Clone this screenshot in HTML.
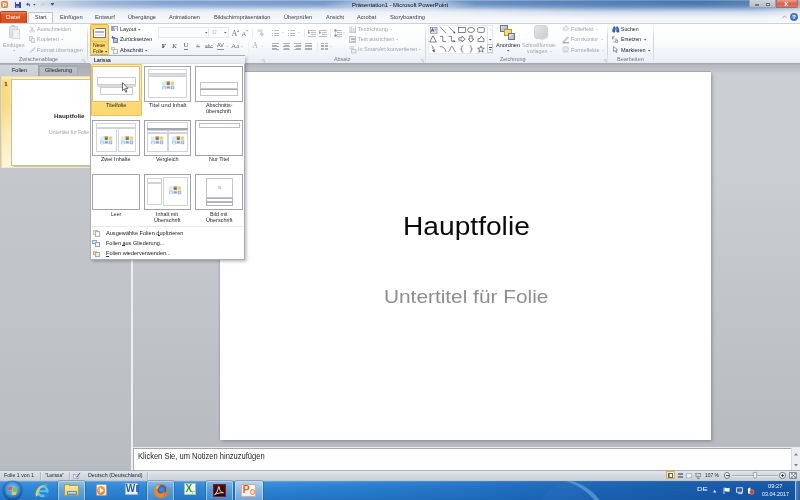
<!DOCTYPE html>
<html lang="de"><head><meta charset="utf-8"><title>Präsentation1 - Microsoft PowerPoint</title>
<style>
html,body{margin:0;padding:0;}
body{width:800px;height:500px;overflow:hidden;position:relative;background:#c3c6cb;font-family:"Liberation Sans",sans-serif;}
div,span.t,svg{position:absolute;box-sizing:border-box;}
span.t{white-space:nowrap;line-height:1;transform-origin:0 50%;}
svg{overflow:visible;}
#root{left:0;top:0;width:800px;height:500px;overflow:hidden;will-change:transform;filter:url(#soft);}
</style></head>
<body>
<svg width="0" height="0" style="position:absolute"><defs><filter id="soft" x="0" y="0" width="100%" height="100%" color-interpolation-filters="sRGB"><feGaussianBlur stdDeviation="0.4" edgeMode="duplicate"/></filter></defs></svg>
<div id="root">
<div style="left:0px;top:0px;width:800px;height:23px;background:linear-gradient(90deg,#edf1f6 0,#e4eaf2 25px,#d0dae8 45px,#b5c7e0 72px,#98b2d6 105px,#7fa2d0 165px,#7398cb 300px,#6c93c6 450px,#5582b9 600px,#4472aa 700px,#5680b3 745px,#9fb6d2 800px);"></div>
<div style="left:0px;top:0px;width:800px;height:23px;background:linear-gradient(180deg,rgba(232,238,246,0) 0,rgba(232,238,246,.06) 4px,rgba(232,238,246,.38) 7px,rgba(236,241,247,.8) 9.5px,#eef1f7 12px,#f3f5f9 17px,#f6f8fb 23px);"></div>
<div style="left:325px;top:-3px;width:150px;height:15px;background:radial-gradient(ellipse at 50% 50%,rgba(240,245,251,.62) 0,rgba(235,241,249,.45) 40%,rgba(230,238,248,0) 72%);"></div>
<div style="left:0px;top:0px;width:800px;height:1.2px;background:rgba(255,255,255,.28);"></div>
<div style="left:430px;top:0px;width:370px;height:19px;background:linear-gradient(180deg,rgba(70,112,168,.25) 0,rgba(84,125,180,.55) 6px,rgba(110,148,198,.5) 9px,rgba(140,172,212,.3) 12px,rgba(170,195,225,0) 18px);-webkit-mask-image:linear-gradient(90deg,transparent 0,#000 45%,#000 88%,rgba(0,0,0,.3) 100%);mask-image:linear-gradient(90deg,transparent 0,#000 45%,#000 88%,rgba(0,0,0,.3) 100%);"></div>
<div style="left:0.9px;top:1.1px;width:7.5px;height:7.1px;background:linear-gradient(135deg,#f7b06a,#e9873a);border-radius:1.3px;border:0.5px solid #d8803a;"></div>
<span class="t" style="left:2.63px;top:2px;font-size:6.2px;color:#fff;font-weight:bold;">P</span>
<div style="left:14.8px;top:1.8px;width:5.8px;height:6.2px;background:#3d44a6;border-radius:.5px;"></div>
<div style="left:16.4px;top:1.8px;width:2.8px;height:2.3px;background:#e3e9f6;"></div>
<div style="left:16.2px;top:5.6px;width:3px;height:2.4px;background:#8f97d2;"></div>
<svg style="left:25px;top:1.5px;" width="6" height="6" viewBox="0 0 6 6"><path d="M1 2.2 L3 0.6 V1.6 C5 1.6 5.6 3 5 5 C4.6 3.6 4 3.2 3 3.2 V4 Z" fill="#3a66c4"/></svg>
<svg style="left:33.15px;top:3.79px;" width="2.7" height="1.62" viewBox="0 0 3 1.8"><path d="M0 0H3L1.5 1.8Z" fill="#444"/></svg>
<svg style="left:39.5px;top:1.5px;" width="6" height="6" viewBox="0 0 6 6"><path d="M5 2.2 L3 0.6 V1.6 C1 1.6 0.4 3 1 5 C1.4 3.6 2 3.2 3 3.2 V4 Z" fill="#c5ccd6"/></svg>
<div style="left:51px;top:3px;width:3px;height:0.7px;background:#555;"></div>
<svg style="left:51.15px;top:4.39px;" width="2.7" height="1.62" viewBox="0 0 3 1.8"><path d="M0 0H3L1.5 1.8Z" fill="#444"/></svg>
<span class="t" style="left:351.70px;top:2px;font-size:6.2px;color:#05070a;transform:scaleX(0.9409);">Präsentation1 - Microsoft PowerPoint</span>
<div style="left:749px;top:0px;width:26.5px;height:8px;background:linear-gradient(180deg,#cdd4dd,#b3bcc8);border-radius:0 0 0 2px;border:0.5px solid #98a3b1;border-top:none;"></div>
<div style="left:775.5px;top:0px;width:22px;height:8px;background:linear-gradient(180deg,#e9a192,#d9634e 50%,#dd7561);border-radius:0 0 2px 0;border:0.5px solid #b06a5a;border-top:none;"></div>
<div style="left:754.5px;top:4.2px;width:4.5px;height:1.6px;background:#fff;border:0.3px solid #777;"></div>
<div style="left:765.5px;top:2.6px;width:4.2px;height:3.6px;background:#fff;border:0.8px solid #6a717a;"></div>
<span class="t" style="left:784.25px;top:0px;font-size:7px;color:#fff;font-weight:bold;">x</span>
<div style="left:790.3px;top:13.3px;width:7.4px;height:7.4px;border-radius:50%;background:radial-gradient(circle at 40% 35%,#6ea2e6,#2c62b8);border:0.4px solid #2a559b;"></div>
<span class="t" style="left:792.17px;top:14px;font-size:6px;color:#fff;font-weight:bold;">?</span>
<svg style="left:781.5px;top:15px;" width="5" height="4" viewBox="0 0 5 4"><path d="M0.5 3.2 L2.5 0.8 L4.5 3.2" fill="none" stroke="#9aa1ab" stroke-width=".8"/></svg>
<div style="left:0px;top:10.8px;width:27.2px;height:11.9px;background:linear-gradient(180deg,#ee8a63 0,#e2602f 18%,#d8501c 55%,#d9541f 100%);border-radius:1.5px 1.5px 0 0;border:0.5px solid #b8410f;border-bottom:none;"></div>
<span class="t" style="left:6.35px;top:15px;font-size:5.9px;color:#fff;transform:scaleX(1.0527);">Datei</span>
<div style="left:28px;top:11.7px;width:24.8px;height:11.6px;background:linear-gradient(180deg,#fbfcfe,#ffffff);border:0.6px solid #bcc5d1;border-bottom:none;border-radius:1.5px 1.5px 0 0;"></div>
<span class="t" style="left:34.65px;top:15px;font-size:5.9px;color:#2b2f36;transform:scaleX(0.9229);">Start</span>
<span class="t" style="left:59.50px;top:15px;font-size:5.9px;color:#393d45;transform:scaleX(0.9703);">Einfügen</span>
<span class="t" style="left:95.00px;top:15px;font-size:5.9px;color:#393d45;">Entwurf</span>
<span class="t" style="left:128.00px;top:15px;font-size:5.9px;color:#393d45;transform:scaleX(0.9590);">Übergänge</span>
<span class="t" style="left:169.00px;top:15px;font-size:5.9px;color:#393d45;transform:scaleX(0.9451);">Animationen</span>
<span class="t" style="left:213.75px;top:15px;font-size:5.9px;color:#393d45;transform:scaleX(0.9466);">Bildschirmpräsentation</span>
<span class="t" style="left:283.85px;top:15px;font-size:5.9px;color:#393d45;transform:scaleX(0.9587);">Überprüfen</span>
<span class="t" style="left:325.70px;top:15px;font-size:5.9px;color:#393d45;transform:scaleX(0.9303);">Ansicht</span>
<span class="t" style="left:356.85px;top:15px;font-size:5.9px;color:#393d45;transform:scaleX(0.9492);">Acrobat</span>
<span class="t" style="left:389.50px;top:15px;font-size:5.9px;color:#393d45;transform:scaleX(0.9528);">Storyboarding</span>
<div style="left:0px;top:22.8px;width:800px;height:40.2px;background:linear-gradient(180deg,#ffffff 0,#fbfcfd 45%,#f1f4f8 75%,#e9edf3 100%);border-top:0.6px solid #cbd2dc;"></div>
<div style="left:0px;top:62.6px;width:800px;height:0.8px;background:#9ea4ad;"></div>
<div style="left:8.6px;top:25.8px;width:9px;height:11.8px;background:linear-gradient(135deg,#e6e8ec,#d6d9de);border-radius:1px;border:0.4px solid #d0d3d9;"></div>
<div style="left:12.4px;top:29.4px;width:8px;height:9.8px;background:#f1f2f5;border:0.5px solid #d3d6dc;"></div>
<div style="left:11.3px;top:24.9px;width:4px;height:2px;background:#c9ccd2;border-radius:.6px;"></div>
<span class="t" style="left:3.25px;top:43px;font-size:5.6px;color:#a0a4aa;transform:scaleX(0.9725);">Einfügen</span>
<svg style="left:12.8px;top:49.88px;" width="2.4" height="1.44" viewBox="0 0 3 1.8"><path d="M0 0H3L1.5 1.8Z" fill="#b9bdc3"/></svg>
<svg style="left:29px;top:26px;" width="6" height="6.5" viewBox="0 0 6 6.5"><path d="M1.5 0.5L4 4.5M4.5 0.5L2 4.5" stroke="#b6bac1" stroke-width=".7" fill="none"/><circle cx="1.6" cy="5.3" r="1" fill="none" stroke="#b6bac1" stroke-width=".6"/><circle cx="4.4" cy="5.3" r="1" fill="none" stroke="#b6bac1" stroke-width=".6"/></svg>
<span class="t" style="left:37.00px;top:27px;font-size:5.6px;color:#a0a4aa;transform:scaleX(0.9664);">Ausschneiden</span>
<div style="left:29px;top:36.3px;width:4px;height:4.6px;background:#eef0f3;border:0.5px solid #c9ccd3;"></div>
<div style="left:31px;top:38px;width:4px;height:4.6px;background:#eef0f3;border:0.5px solid #c9ccd3;"></div>
<span class="t" style="left:37.00px;top:37px;font-size:5.6px;color:#a0a4aa;transform:scaleX(0.9814);">Kopieren</span>
<svg style="left:61.3px;top:39.08px;" width="2.4" height="1.44" viewBox="0 0 3 1.8"><path d="M0 0H3L1.5 1.8Z" fill="#b9bdc3"/></svg>
<svg style="left:28.5px;top:46.5px;" width="7" height="7" viewBox="0 0 7 7"><path d="M6 0.5L3 4.2 L1 6.2 L0.6 5 L2.4 3.4 Z" fill="#c3c6cc"/><path d="M6.2 0.3L3.3 4" stroke="#aeb2b9" stroke-width=".8"/></svg>
<span class="t" style="left:37.00px;top:48px;font-size:5.6px;color:#a0a4aa;transform:scaleX(0.9918);">Format übertragen</span>
<span class="t" style="left:19.00px;top:57px;font-size:5.5px;color:#727882;transform:scaleX(0.9812);">Zwischenablage</span>
<svg style="left:81.5px;top:59.2px;" width="3.2" height="3.2" viewBox="0 0 3.2 3.2"><path d="M0.3 2.6V0.3H2.6" fill="none" stroke="#b4b9c1" stroke-width=".5"/><path d="M1.3 1.3L2.9 2.9M2.9 1.6V2.9H1.6" fill="none" stroke="#a3a9b2" stroke-width=".5"/></svg>
<div style="left:87.3px;top:25px;width:0.7px;height:36px;background:linear-gradient(180deg,rgba(200,206,215,0),#cfd5de 30%,#cfd5de 80%,rgba(200,206,215,.2));"></div>
<div style="left:89.7px;top:24.3px;width:19.7px;height:30.3px;background:linear-gradient(180deg,#fcd660 0,#fddf82 38%,#fcd564 58%,#fde08a 100%);border:0.6px solid #e4b243;border-radius:1.3px;"></div>
<div style="left:90.2px;top:41.2px;width:18.7px;height:0.6px;background:#e9bd55;"></div>
<div style="left:93.2px;top:28px;width:12.7px;height:10.3px;background:#fdfdfe;border:0.7px solid #70747c;border-bottom-width:1px;border-radius:.6px;"></div>
<div style="left:94.6px;top:31.3px;width:9.9px;height:2.1px;background:#aeb6c8;"></div>
<div style="left:94.6px;top:33.8px;width:9.9px;height:1.8px;background:#dde1ea;"></div>
<svg style="left:91.6px;top:26px;" width="4.4" height="4.4" viewBox="0 0 4.4 4.4"><path d="M2.2 0L2.8 1.6L4.4 2.2L2.8 2.8L2.2 4.4L1.6 2.8L0 2.2L1.6 1.6Z" fill="#fbe08a" stroke="#f0b43a" stroke-width=".25"/></svg>
<span class="t" style="left:93.30px;top:43px;font-size:5.6px;color:#2a2614;transform:scaleX(0.9113);">Neue</span>
<span class="t" style="left:92.70px;top:49px;font-size:5.6px;color:#2a2614;transform:scaleX(0.8568);">Folie</span>
<svg style="left:104.9px;top:50.68px;" width="2.4" height="1.44" viewBox="0 0 3 1.8"><path d="M0 0H3L1.5 1.8Z" fill="#3a3520"/></svg>
<div style="left:111.3px;top:26.3px;width:6.5px;height:5.2px;background:linear-gradient(180deg,#d5dff0,#b3c3de);border:0.5px solid #93a2bb;"></div>
<div style="left:112.2px;top:27.3px;width:1.8px;height:3.2px;background:#8fa3c4;"></div>
<div style="left:114.6px;top:27.3px;width:2.4px;height:0.5px;background:#eef3fa;"></div>
<div style="left:114.6px;top:28.6px;width:2.4px;height:0.5px;background:#eef3fa;"></div>
<div style="left:114.6px;top:29.9px;width:2.4px;height:0.5px;background:#eef3fa;"></div>
<span class="t" style="left:120.00px;top:27px;font-size:5.6px;color:#22252b;transform:scaleX(0.9694);">Layout</span>
<svg style="left:138.1px;top:28.78px;" width="2.4" height="1.44" viewBox="0 0 3 1.8"><path d="M0 0H3L1.5 1.8Z" fill="#555"/></svg>
<div style="left:112.8px;top:38px;width:5.4px;height:4.8px;background:linear-gradient(180deg,#c9d5e8,#9fb2cf);border:0.5px solid #7487a6;"></div>
<svg style="left:111px;top:35.4px;" width="5.2" height="4.6" viewBox="0 0 5.2 4.6"><path d="M0.3 2.4 L2 0.6 V1.7 C3.6 1.7 4.3 2.5 4.4 3.8 C3.7 3 3 2.9 2 2.9 V4 Z" fill="#2d62b6"/></svg>
<span class="t" style="left:120.00px;top:37px;font-size:5.6px;color:#22252b;transform:scaleX(0.9609);">Zurücksetzen</span>
<div style="left:111.4px;top:46.8px;width:3.2px;height:3.2px;background:#f5ecc4;border:0.4px solid #d4c58c;"></div>
<div style="left:113.4px;top:48.6px;width:4.8px;height:5.2px;background:#f4f5f7;border:0.5px solid #b3b8c1;"></div>
<span class="t" style="left:120.00px;top:48px;font-size:5.6px;color:#22252b;transform:scaleX(1.0072);">Abschnitt</span>
<svg style="left:145.1px;top:49.68px;" width="2.4" height="1.44" viewBox="0 0 3 1.8"><path d="M0 0H3L1.5 1.8Z" fill="#555"/></svg>
<div style="left:155.8px;top:25px;width:0.7px;height:36px;background:linear-gradient(180deg,rgba(200,206,215,0),#cfd5de 30%,#cfd5de 80%,rgba(200,206,215,.2));"></div>
<div style="left:158.3px;top:26.8px;width:50.5px;height:11.2px;background:#fbfcfd;border:0.6px solid #e4e7ed;"></div>
<div style="left:208.8px;top:26.8px;width:20.4px;height:11.2px;background:#fbfcfd;border:0.6px solid #e4e7ed;border-left:none;"></div>
<svg style="left:204.725px;top:31.935px;" width="2.55" height="1.53" viewBox="0 0 3 1.8"><path d="M0 0H3L1.5 1.8Z" fill="#5a5f67"/></svg>
<span class="t" style="left:212.00px;top:30px;font-size:5.2px;color:#b7bbc2;transform:scaleX(0.7953);">32</span>
<svg style="left:223.725px;top:31.935px;" width="2.55" height="1.53" viewBox="0 0 3 1.8"><path d="M0 0H3L1.5 1.8Z" fill="#5a5f67"/></svg>
<span class="t" style="left:231.41px;top:30px;font-size:8px;color:#6a6f77;font-family:'Liberation Serif',serif;">A</span>
<svg style="left:236.5px;top:29.6px;" width="2.4" height="2" viewBox="0 0 2.4 2"><path d="M0 2L1.2 0L2.4 2Z" fill="#9398a0"/></svg>
<span class="t" style="left:241.42px;top:31px;font-size:6.6px;color:#7d828a;font-family:'Liberation Serif',serif;">A</span>
<svg style="left:245.6px;top:29.8px;" width="2.2" height="1.8" viewBox="0 0 2.2 1.8"><path d="M0 0L1.1 1.8L2.2 0Z" fill="#a2a7ae"/></svg>
<div style="left:252.3px;top:27.5px;width:0.6px;height:10px;background:#eceff3;"></div>
<svg style="left:256.5px;top:28.5px;" width="8" height="8" viewBox="0 0 8 8"><path d="M0.6 1h5.2M1 2.3h4.4M4.2 3.2 L6.6 5.6 L5 7 L3.2 5.2Z" fill="#cfd3d9" stroke="#b4b9c0" stroke-width=".7"/></svg>
<span class="t" style="left:161.72px;top:43px;font-size:6.8px;color:#3f434a;font-weight:bold;font-family:'Liberation Serif',serif;">F</span>
<span class="t" style="left:172.13px;top:43px;font-size:6.8px;color:#494d55;font-style:italic;font-family:'Liberation Serif',serif;">K</span>
<span class="t" style="left:183.47px;top:42px;font-size:7px;color:#51555d;font-family:'Liberation Serif',serif;">U</span>
<div style="left:183.6px;top:49.2px;width:4.8px;height:0.5px;background:#777c84;"></div>
<span class="t" style="left:196.16px;top:43px;font-size:6.6px;color:#9a9fa6;font-family:'Liberation Serif',serif;">S</span>
<div style="left:195.6px;top:46.2px;width:4.8px;height:0.45px;background:#9a9fa6;"></div>
<span class="t" style="left:205.10px;top:44px;font-size:5px;color:#6d727a;transform:scaleX(0.9675);">abc</span>
<div style="left:205px;top:46.6px;width:8px;height:0.5px;background:#8f949c;"></div>
<span class="t" style="left:216.90px;top:44px;font-size:4.8px;color:#5b6068;transform:scaleX(1.1245);">AV</span>
<div style="left:217px;top:48.8px;width:6.6px;height:0.5px;background:#8f949c;"></div>
<svg style="left:225.55px;top:45.97px;" width="2.1" height="1.26" viewBox="0 0 3 1.8"><path d="M0 0H3L1.5 1.8Z" fill="#c4c8cf"/></svg>
<span class="t" style="left:231.30px;top:43px;font-size:7px;color:#72777f;font-family:'Liberation Serif',serif;transform:scaleX(1.0291);">Aa</span>
<svg style="left:241.25px;top:45.97px;" width="2.1" height="1.26" viewBox="0 0 3 1.8"><path d="M0 0H3L1.5 1.8Z" fill="#c4c8cf"/></svg>
<div style="left:247.8px;top:41.5px;width:0.6px;height:9.5px;background:#eceff3;"></div>
<span class="t" style="left:252.46px;top:42px;font-size:7.6px;color:#aeb2b9;font-family:'Liberation Serif',serif;">A</span>
<svg style="left:261.35px;top:45.97px;" width="2.1" height="1.26" viewBox="0 0 3 1.8"><path d="M0 0H3L1.5 1.8Z" fill="#cfd3d9"/></svg>
<svg style="left:262px;top:59.2px;" width="3.2" height="3.2" viewBox="0 0 3.2 3.2"><path d="M0.3 2.6V0.3H2.6" fill="none" stroke="#b4b9c1" stroke-width=".5"/><path d="M1.3 1.3L2.9 2.9M2.9 1.6V2.9H1.6" fill="none" stroke="#a3a9b2" stroke-width=".5"/></svg>
<div style="left:266.6px;top:25px;width:0.7px;height:36px;background:linear-gradient(180deg,rgba(200,206,215,0),#cfd5de 30%,#cfd5de 80%,rgba(200,206,215,.2));"></div>
<div style="left:272px;top:30.2px;width:1.2px;height:1.2px;background:#a9aeb6;"></div>
<div style="left:274.2px;top:30.4px;width:4.8px;height:0.7px;background:#b9bdc4;"></div>
<div style="left:272px;top:32.5px;width:1.2px;height:1.2px;background:#a9aeb6;"></div>
<div style="left:274.2px;top:32.7px;width:4.8px;height:0.7px;background:#b9bdc4;"></div>
<div style="left:272px;top:34.8px;width:1.2px;height:1.2px;background:#a9aeb6;"></div>
<div style="left:274.2px;top:35px;width:4.8px;height:0.7px;background:#b9bdc4;"></div>
<div style="left:288px;top:30.2px;width:1.2px;height:1.2px;background:#a9aeb6;"></div>
<div style="left:290.2px;top:30.4px;width:4.8px;height:0.7px;background:#b9bdc4;"></div>
<div style="left:288px;top:32.5px;width:1.2px;height:1.2px;background:#a9aeb6;"></div>
<div style="left:290.2px;top:32.7px;width:4.8px;height:0.7px;background:#b9bdc4;"></div>
<div style="left:288px;top:34.8px;width:1.2px;height:1.2px;background:#a9aeb6;"></div>
<div style="left:290.2px;top:35px;width:4.8px;height:0.7px;background:#b9bdc4;"></div>
<svg style="left:281.95px;top:32.37px;" width="2.1" height="1.26" viewBox="0 0 3 1.8"><path d="M0 0H3L1.5 1.8Z" fill="#cdd1d7"/></svg>
<svg style="left:297.95px;top:32.37px;" width="2.1" height="1.26" viewBox="0 0 3 1.8"><path d="M0 0H3L1.5 1.8Z" fill="#cdd1d7"/></svg>
<div style="left:303.8px;top:27.5px;width:0.6px;height:10px;background:#eaedf1;"></div>
<div style="left:308px;top:29.6px;width:7.5px;height:0.7px;background:#b9bdc4;"></div>
<div style="left:311px;top:31.6px;width:4.5px;height:0.7px;background:#b9bdc4;"></div>
<div style="left:311px;top:33.6px;width:4.5px;height:0.7px;background:#b9bdc4;"></div>
<div style="left:308px;top:35.6px;width:7.5px;height:0.7px;background:#b9bdc4;"></div>
<svg style="left:308px;top:31px;" width="2.6" height="3" viewBox="0 0 2.6 3"><path d="M0 0L2.4 1.5L0 3Z" fill="#8f96a3"/></svg>
<div style="left:319px;top:29.6px;width:7.5px;height:0.7px;background:#b9bdc4;"></div>
<div style="left:322px;top:31.6px;width:4.5px;height:0.7px;background:#b9bdc4;"></div>
<div style="left:322px;top:33.6px;width:4.5px;height:0.7px;background:#b9bdc4;"></div>
<div style="left:319px;top:35.6px;width:7.5px;height:0.7px;background:#b9bdc4;"></div>
<svg style="left:319px;top:31px;" width="2.6" height="3" viewBox="0 0 2.6 3"><path d="M0 0L2.4 1.5L0 3Z" fill="#8f96a3"/></svg>
<div style="left:330px;top:27.5px;width:0.6px;height:10px;background:#eaedf1;"></div>
<div style="left:337px;top:29.8px;width:4.5px;height:0.7px;background:#b9bdc4;"></div>
<div style="left:337px;top:31.7px;width:4.5px;height:0.7px;background:#b9bdc4;"></div>
<div style="left:337px;top:33.6px;width:4.5px;height:0.7px;background:#b9bdc4;"></div>
<div style="left:337px;top:35.5px;width:4.5px;height:0.7px;background:#b9bdc4;"></div>
<svg style="left:333.6px;top:28.8px;" width="3" height="8" viewBox="0 0 3 8"><path d="M1.5 0L3 2H0ZM1.5 8L3 6H0ZM1.5 1.5V6.5" fill="#8f949c" stroke="#8f949c" stroke-width=".5"/></svg>
<svg style="left:343.35px;top:32.37px;" width="2.1" height="1.26" viewBox="0 0 3 1.8"><path d="M0 0H3L1.5 1.8Z" fill="#cdd1d7"/></svg>
<div style="left:272px;top:43.2px;width:7px;height:0.7px;background:#aab0b9;"></div>
<div style="left:272px;top:44.7px;width:5px;height:0.7px;background:#aab0b9;"></div>
<div style="left:272px;top:46.2px;width:7px;height:0.7px;background:#aab0b9;"></div>
<div style="left:272px;top:47.7px;width:5px;height:0.7px;background:#aab0b9;"></div>
<div style="left:272px;top:49.2px;width:7px;height:0.7px;background:#aab0b9;"></div>
<div style="left:283px;top:43.2px;width:7px;height:0.7px;background:#aab0b9;"></div>
<div style="left:284px;top:44.7px;width:5px;height:0.7px;background:#aab0b9;"></div>
<div style="left:283px;top:46.2px;width:7px;height:0.7px;background:#aab0b9;"></div>
<div style="left:284px;top:47.7px;width:5px;height:0.7px;background:#aab0b9;"></div>
<div style="left:283px;top:49.2px;width:7px;height:0.7px;background:#aab0b9;"></div>
<div style="left:294px;top:43.2px;width:7px;height:0.7px;background:#aab0b9;"></div>
<div style="left:296px;top:44.7px;width:5px;height:0.7px;background:#aab0b9;"></div>
<div style="left:294px;top:46.2px;width:7px;height:0.7px;background:#aab0b9;"></div>
<div style="left:296px;top:47.7px;width:5px;height:0.7px;background:#aab0b9;"></div>
<div style="left:294px;top:49.2px;width:7px;height:0.7px;background:#aab0b9;"></div>
<div style="left:305px;top:43.2px;width:7px;height:0.7px;background:#aab0b9;"></div>
<div style="left:305px;top:44.7px;width:7px;height:0.7px;background:#aab0b9;"></div>
<div style="left:305px;top:46.2px;width:7px;height:0.7px;background:#aab0b9;"></div>
<div style="left:305px;top:47.7px;width:7px;height:0.7px;background:#aab0b9;"></div>
<div style="left:305px;top:49.2px;width:7px;height:0.7px;background:#aab0b9;"></div>
<div style="left:316.6px;top:41.5px;width:0.6px;height:9.5px;background:#eaedf1;"></div>
<div style="left:320.5px;top:43.2px;width:3px;height:0.7px;background:#aab0b9;"></div>
<div style="left:320.5px;top:44.7px;width:3px;height:0.7px;background:#aab0b9;"></div>
<div style="left:320.5px;top:46.2px;width:3px;height:0.7px;background:#aab0b9;"></div>
<div style="left:320.5px;top:47.7px;width:3px;height:0.7px;background:#aab0b9;"></div>
<div style="left:320.5px;top:49.2px;width:3px;height:0.7px;background:#aab0b9;"></div>
<div style="left:324.5px;top:43.2px;width:3px;height:0.7px;background:#aab0b9;"></div>
<div style="left:324.5px;top:44.7px;width:3px;height:0.7px;background:#aab0b9;"></div>
<div style="left:324.5px;top:46.2px;width:3px;height:0.7px;background:#aab0b9;"></div>
<div style="left:324.5px;top:47.7px;width:3px;height:0.7px;background:#aab0b9;"></div>
<div style="left:324.5px;top:49.2px;width:3px;height:0.7px;background:#aab0b9;"></div>
<svg style="left:330.35px;top:45.97px;" width="2.1" height="1.26" viewBox="0 0 3 1.8"><path d="M0 0H3L1.5 1.8Z" fill="#cdd1d7"/></svg>
<svg style="left:349px;top:25.5px;" width="7.5" height="7" viewBox="0 0 7.5 7"><path d="M1 0.5V6M2.8 0.5V6M4.8 2V6M6.4 0.5V6M0.4 6.4H7.1" stroke="#a5aab2" stroke-width=".7" fill="none"/></svg>
<span class="t" style="left:357.80px;top:27px;font-size:5.6px;color:#a0a4aa;">Textrichtung</span>
<svg style="left:390.075px;top:28.825px;" width="2.25" height="1.35" viewBox="0 0 3 1.8"><path d="M0 0H3L1.5 1.8Z" fill="#c4c8cf"/></svg>
<div style="left:349.3px;top:36px;width:6.6px;height:6.6px;background:#f0f1f4;border:0.5px solid #bfc3ca;"></div>
<div style="left:350.6px;top:37.6px;width:4px;height:0.7px;background:#b5b9c0;"></div>
<div style="left:350.6px;top:39.1px;width:4px;height:0.7px;background:#b5b9c0;"></div>
<div style="left:350.6px;top:40.6px;width:4px;height:0.7px;background:#b5b9c0;"></div>
<span class="t" style="left:357.80px;top:37px;font-size:5.6px;color:#a0a4aa;transform:scaleX(0.9611);">Text ausrichten</span>
<svg style="left:396.075px;top:39.125px;" width="2.25" height="1.35" viewBox="0 0 3 1.8"><path d="M0 0H3L1.5 1.8Z" fill="#c4c8cf"/></svg>
<svg style="left:349px;top:45.6px;" width="7.5" height="7.5" viewBox="0 0 7.5 7.5"><path d="M0.5 0.8H5M0.5 2.3H5M2.5 3.5H7V7H2.5Z" stroke="#b2b6bd" stroke-width=".7" fill="#eceef1"/></svg>
<span class="t" style="left:357.80px;top:47px;font-size:5.6px;color:#a0a4aa;transform:scaleX(0.9787);">In SmartArt konvertieren</span>
<svg style="left:419.175px;top:49.225px;" width="2.25" height="1.35" viewBox="0 0 3 1.8"><path d="M0 0H3L1.5 1.8Z" fill="#c4c8cf"/></svg>
<span class="t" style="left:334.05px;top:57px;font-size:5.5px;color:#727882;transform:scaleX(0.9813);">Absatz</span>
<svg style="left:420.8px;top:59.2px;" width="3.2" height="3.2" viewBox="0 0 3.2 3.2"><path d="M0.3 2.6V0.3H2.6" fill="none" stroke="#b4b9c1" stroke-width=".5"/><path d="M1.3 1.3L2.9 2.9M2.9 1.6V2.9H1.6" fill="none" stroke="#a3a9b2" stroke-width=".5"/></svg>
<div style="left:425.4px;top:25px;width:0.7px;height:36px;background:linear-gradient(180deg,rgba(200,206,215,0),#cfd5de 30%,#cfd5de 80%,rgba(200,206,215,.2));"></div>
<div style="left:428.3px;top:25px;width:65px;height:28.6px;background:#fdfdfe;border:0.6px solid #e6e9ee;"></div>
<div style="left:486.6px;top:25px;width:0.6px;height:28.6px;background:#e3e6ec;"></div>
<svg style="left:429.6px;top:26.6px;" width="7.4" height="6.6" viewBox="0 0 7.4 6.6"><rect x=".4" y=".4" width="6.6" height="5.8" fill="#e4ebf6" stroke="#66748c" stroke-width=".6"/><path d="M1.2 4.8L2.6 1.4L4 4.8M1.7 3.7H3.5" fill="none" stroke="#2b3a58" stroke-width=".75"/><path d="M4.6 2H6.4M4.6 3.3H6.4" stroke="#5b6a85" stroke-width=".5"/></svg>
<svg style="left:438.6px;top:26px;" width="8" height="8" viewBox="0 0 8 8"><path d="M1 0.8L7 7.2" fill="none" stroke="#464a52" stroke-width=".68"/></svg>
<svg style="left:448.4px;top:26px;" width="8" height="8" viewBox="0 0 8 8"><path d="M0.8 0.8L6.6 6.8" fill="none" stroke="#464a52" stroke-width=".68"/><path d="M7.4 7.6L5 6.9L6.7 5.2Z" fill="#464a52"/></svg>
<svg style="left:458px;top:26px;" width="8" height="8" viewBox="0 0 8 8"><rect x="0.6" y="1.6" width="6.8" height="4.8" fill="none" stroke="#464a52" stroke-width=".68"/></svg>
<svg style="left:467.4px;top:26px;" width="8" height="8" viewBox="0 0 8 8"><ellipse cx="4" cy="4" rx="3.5" ry="2.5" fill="none" stroke="#464a52" stroke-width=".68"/></svg>
<svg style="left:477px;top:26px;" width="8" height="8" viewBox="0 0 8 8"><rect x="0.6" y="1.6" width="6.8" height="4.8" rx="1.1" fill="none" stroke="#464a52" stroke-width=".68"/></svg>
<svg style="left:429.2px;top:35.4px;" width="8" height="8" viewBox="0 0 8 8"><path d="M4 0.8L7.3 7H0.7Z" fill="none" stroke="#464a52" stroke-width=".68"/></svg>
<svg style="left:438.6px;top:35.4px;" width="8" height="8" viewBox="0 0 8 8"><path d="M0.8 1.4H3.8V6.6H7" fill="none" stroke="#464a52" stroke-width=".68"/></svg>
<svg style="left:448.4px;top:35.4px;" width="8" height="8" viewBox="0 0 8 8"><path d="M0.6 1.4H3.6V6.2H6" fill="none" stroke="#464a52" stroke-width=".68"/><path d="M7.6 6.2L5.6 5V7.4Z" fill="#464a52"/></svg>
<svg style="left:458px;top:35.4px;" width="8" height="8" viewBox="0 0 8 8"><path d="M0.8 2.8H4V1.2L7.2 4L4 6.8V5.2H0.8Z" fill="none" stroke="#464a52" stroke-width=".68"/></svg>
<svg style="left:467.4px;top:35.4px;" width="8" height="8" viewBox="0 0 8 8"><path d="M2.8 0.8H5.2V4H6.8L4 7.2L1.2 4H2.8Z" fill="none" stroke="#464a52" stroke-width=".68"/></svg>
<svg style="left:477px;top:35.4px;" width="8" height="8" viewBox="0 0 8 8"><path d="M1 6.6V3.8L3 3.4L4.4 1.2L5.8 3.4L7 3.8V6.6Z" fill="none" stroke="#464a52" stroke-width=".68"/></svg>
<svg style="left:429.2px;top:44.8px;" width="8" height="8" viewBox="0 0 8 8"><path d="M2.6 0.6L4.4 2.2L3.4 2.8L5 4.6" fill="none" stroke="#464a52" stroke-width=".68"/><path d="M5.6 7.4L3 5.6L5.6 4.2Z" fill="#464a52"/></svg>
<svg style="left:438.6px;top:44.8px;" width="8" height="8" viewBox="0 0 8 8"><path d="M0.8 1.6C4 1.4 6.2 3.4 7 7" fill="none" stroke="#464a52" stroke-width=".68"/></svg>
<svg style="left:448.4px;top:44.8px;" width="8" height="8" viewBox="0 0 8 8"><path d="M0.6 6.6C2 6 2.6 1.2 3.8 1.2C5 1.2 5.6 5 7.4 7" fill="none" stroke="#464a52" stroke-width=".68"/></svg>
<svg style="left:458px;top:44.8px;" width="8" height="8" viewBox="0 0 8 8"><path d="M5.2 0.6C3.6 0.6 4 2.2 3.8 3.2C3.7 3.8 3 4 2.6 4C3 4 3.7 4.2 3.8 4.8C4 5.8 3.6 7.4 5.2 7.4" fill="none" stroke="#464a52" stroke-width=".68"/></svg>
<svg style="left:467.4px;top:44.8px;" width="8" height="8" viewBox="0 0 8 8"><path d="M2.8 0.6C4.4 0.6 4 2.2 4.2 3.2C4.3 3.8 5 4 5.4 4C5 4 4.3 4.2 4.2 4.8C4 5.8 4.4 7.4 2.8 7.4" fill="none" stroke="#464a52" stroke-width=".68"/></svg>
<svg style="left:477px;top:44.8px;" width="8" height="8" viewBox="0 0 8 8"><path d="M4 0.8L4.9 3.1L7.4 3.2L5.4 4.8L6.1 7.2L4 5.8L1.9 7.2L2.6 4.8L0.6 3.2L3.1 3.1Z" fill="none" stroke="#464a52" stroke-width=".68"/></svg>
<svg style="left:488.6px;top:29.3px;" width="3" height="1.6" viewBox="0 0 3 1.6"><path d="M0 1.6L1.5 0L3 1.6Z" fill="#d3d7dd"/></svg>
<svg style="left:488.725px;top:38.835px;" width="2.55" height="1.53" viewBox="0 0 3 1.8"><path d="M0 0H3L1.5 1.8Z" fill="#4b5058"/></svg>
<div style="left:487.2px;top:44.2px;width:5.9px;height:9.2px;border:0.5px solid #c3c8d0;background:#f6f8fa;"></div>
<div style="left:488.6px;top:46.8px;width:3px;height:0.6px;background:#4b5058;"></div>
<svg style="left:488.825px;top:48.535px;" width="2.55" height="1.53" viewBox="0 0 3 1.8"><path d="M0 0H3L1.5 1.8Z" fill="#4b5058"/></svg>
<div style="left:500px;top:25.4px;width:7.6px;height:6.6px;background:linear-gradient(135deg,#dfe4ec,#9aa6b8);border:0.6px solid #6d7685;"></div>
<div style="left:503.6px;top:29.2px;width:8px;height:7px;background:linear-gradient(135deg,#fbe88f,#f0cf4e);border:0.6px solid #b79a2c;"></div>
<div style="left:508px;top:33.2px;width:7px;height:6.4px;background:linear-gradient(135deg,#e4e7ec,#a4abb8);border:0.6px solid #6d7685;"></div>
<span class="t" style="left:496.20px;top:43px;font-size:5.6px;color:#22252b;transform:scaleX(0.9881);">Anordnen</span>
<svg style="left:506.925px;top:50.435px;" width="2.55" height="1.53" viewBox="0 0 3 1.8"><path d="M0 0H3L1.5 1.8Z" fill="#4b5058"/></svg>
<div style="left:534.4px;top:25.4px;width:13.6px;height:14px;background:linear-gradient(135deg,#e4e6ea,#c9ccd2);border-radius:3px;border:0.5px solid #d0d3d9;"></div>
<svg style="left:540px;top:33px;" width="8.4" height="6.8" viewBox="0 0 8.4 6.8"><path d="M8 0C7.4 3.6 4.6 6.2 0.6 6.6C4 6.8 8 5.4 8 0Z" fill="#f7f8fa" stroke="#c7cbd1" stroke-width=".4"/></svg>
<span class="t" style="left:522.25px;top:43px;font-size:5.6px;color:#a0a4aa;transform:scaleX(0.9556);">Schnellformat-</span>
<span class="t" style="left:527.40px;top:49px;font-size:5.6px;color:#a0a4aa;transform:scaleX(0.9496);">vorlagen</span>
<svg style="left:550.475px;top:51.225px;" width="2.25" height="1.35" viewBox="0 0 3 1.8"><path d="M0 0H3L1.5 1.8Z" fill="#c4c8cf"/></svg>
<svg style="left:562px;top:25.4px;" width="7.5" height="7" viewBox="0 0 7.5 7"><path d="M2.2 2.2L4.4 0.6L6.6 3.6L3.6 5.8L1.4 4Z" fill="#eceef1" stroke="#b0b4bb" stroke-width=".6"/><path d="M1 4.6C0.4 5.4 0.6 6.2 1.2 6.2C1.8 6.2 1.8 5.4 1 4.6Z" fill="#c2c6cc"/></svg>
<span class="t" style="left:571.00px;top:27px;font-size:5.6px;color:#a0a4aa;transform:scaleX(0.9947);">Fülleffekt</span>
<svg style="left:595.875px;top:28.525px;" width="2.25" height="1.35" viewBox="0 0 3 1.8"><path d="M0 0H3L1.5 1.8Z" fill="#c4c8cf"/></svg>
<svg style="left:562px;top:35.6px;" width="7.5" height="7" viewBox="0 0 7.5 7"><path d="M1 5.4L5.6 0.8L6.6 1.8L2 6.2Z" fill="#d5d8dd" stroke="#9da2aa" stroke-width=".5"/><path d="M0.4 6.8H7" stroke="#7e838b" stroke-width=".9"/></svg>
<span class="t" style="left:571.00px;top:37px;font-size:5.6px;color:#a0a4aa;transform:scaleX(0.9431);">Formkontur</span>
<svg style="left:600.675px;top:39.025px;" width="2.25" height="1.35" viewBox="0 0 3 1.8"><path d="M0 0H3L1.5 1.8Z" fill="#c4c8cf"/></svg>
<svg style="left:562px;top:46px;" width="7.5" height="7" viewBox="0 0 7.5 7"><ellipse cx="3.6" cy="3" rx="3" ry="2.4" fill="#e4e6ea" stroke="#b9bdc4" stroke-width=".5"/><path d="M0.8 5.8H6.6" stroke="#c3c7cd" stroke-width=".9"/></svg>
<span class="t" style="left:571.00px;top:48px;font-size:5.6px;color:#a0a4aa;transform:scaleX(0.9572);">Formeffekte</span>
<svg style="left:601.875px;top:49.525px;" width="2.25" height="1.35" viewBox="0 0 3 1.8"><path d="M0 0H3L1.5 1.8Z" fill="#c4c8cf"/></svg>
<span class="t" style="left:499.75px;top:57px;font-size:5.5px;color:#727882;transform:scaleX(0.9928);">Zeichnung</span>
<svg style="left:603.8px;top:59.2px;" width="3.2" height="3.2" viewBox="0 0 3.2 3.2"><path d="M0.3 2.6V0.3H2.6" fill="none" stroke="#b4b9c1" stroke-width=".5"/><path d="M1.3 1.3L2.9 2.9M2.9 1.6V2.9H1.6" fill="none" stroke="#a3a9b2" stroke-width=".5"/></svg>
<div style="left:607.4px;top:25px;width:0.7px;height:36px;background:linear-gradient(180deg,rgba(200,206,215,0),#cfd5de 30%,#cfd5de 80%,rgba(200,206,215,.2));"></div>
<svg style="left:612px;top:25.6px;" width="7.6" height="6.8" viewBox="0 0 7.6 6.8"><path d="M0.6 3.6L1.8 0.8H3.2V3.4M7 3.6L5.8 0.8H4.4V3.4" fill="#3c66b0" stroke="#27477f" stroke-width=".4"/><rect x="0.3" y="3.2" width="3" height="3.2" rx=".8" fill="#345ea8"/><rect x="4.3" y="3.2" width="3" height="3.2" rx=".8" fill="#345ea8"/><rect x="3" y="2" width="1.6" height="1.6" fill="#5b7fc0"/></svg>
<span class="t" style="left:621.20px;top:27px;font-size:5.6px;color:#22252b;transform:scaleX(0.9266);">Suchen</span>
<svg style="left:612px;top:36px;" width="8" height="7" viewBox="0 0 8 7"><path d="M0.6 3.4V0.8H2.6M0.6 2H2" stroke="#4a4f57" stroke-width=".6" fill="none"/><path d="M2.6 3.6C3.6 2.6 5 2.8 5.4 3.8" stroke="#3d6fc2" stroke-width=".6" fill="none"/><path d="M3.6 6.4V4.4H5.2C6 4.4 6 5.4 5.2 5.4C6.2 5.4 6.2 6.4 5.2 6.4Z" stroke="#4a4f57" stroke-width=".5" fill="none"/><path d="M0.8 5.4h2.2v1.2H0.8z" fill="#b8bdc6"/></svg>
<span class="t" style="left:621.20px;top:37px;font-size:5.6px;color:#22252b;transform:scaleX(0.9140);">Ersetzen</span>
<svg style="left:644px;top:39.18px;" width="2.4" height="1.44" viewBox="0 0 3 1.8"><path d="M0 0H3L1.5 1.8Z" fill="#4b5058"/></svg>
<svg style="left:613.4px;top:46.2px;" width="5.4" height="7" viewBox="0 0 5.4 7"><path d="M0.5 0.5V5.6L1.9 4.4L3 6.6L3.9 6.2L2.9 4H4.6Z" fill="#fff" stroke="#3a3e45" stroke-width=".5"/></svg>
<span class="t" style="left:621.20px;top:48px;font-size:5.6px;color:#22252b;transform:scaleX(0.9880);">Markieren</span>
<svg style="left:648px;top:49.68px;" width="2.4" height="1.44" viewBox="0 0 3 1.8"><path d="M0 0H3L1.5 1.8Z" fill="#4b5058"/></svg>
<span class="t" style="left:617.40px;top:57px;font-size:5.5px;color:#727882;transform:scaleX(1.0074);">Bearbeiten</span>
<div style="left:653.2px;top:25px;width:0.7px;height:36px;background:linear-gradient(180deg,rgba(200,206,215,0),#cfd5de 30%,#cfd5de 80%,rgba(200,206,215,.2));"></div>
<div style="left:0px;top:63.3px;width:800px;height:8px;background:linear-gradient(180deg,#a1a5ad 0,#adb1b8 1.4px,#b9bdc3 2.8px,#bfc2c8 5px,#c3c6cb 8px);"></div>
<div style="left:133px;top:65.5px;width:667px;height:382px;background:linear-gradient(180deg,#b7bbc1 0,#bfc2c8 4px,#c6c9ce 6px,#cbced3 9px,#cacdd2 30%,#bfc2c7 70%,#b8bbc0 100%);"></div>
<div style="left:220px;top:71.5px;width:491px;height:368px;background:#fff;box-shadow:1.8px 1.8px 3px rgba(85,90,100,.42),0 -0.9px 0.8px rgba(120,125,135,.45),-1px 0 1.6px rgba(110,115,125,.28);"></div>
<span class="t" style="left:402.70px;top:214px;font-size:25px;color:#0a0a0a;transform:scaleX(1.1263);">Hauptfolie</span>
<span class="t" style="left:383.60px;top:288px;font-size:18.1px;color:#8e8e8e;transform:scaleX(1.1509);">Untertitel für Folie</span>
<div style="left:0px;top:65px;width:130.8px;height:405.5px;background:linear-gradient(180deg,#c3c6cb 0,#c4c7cc 25%,#c0c3c8 60%,#b9bcc1 100%);"></div>
<div style="left:0px;top:65px;width:130.8px;height:10.8px;background:linear-gradient(180deg,#a8adb5,#b4b8bf);"></div>
<div style="left:0px;top:65.3px;width:38.6px;height:10.6px;background:linear-gradient(180deg,#d3d7dd,#c9cdd4);border-right:0.5px solid #9ea3ab;"></div>
<div style="left:39px;top:65.6px;width:39.2px;height:10px;background:linear-gradient(180deg,#bcc1ca,#b3b8c1);border:0.5px solid #a3a8b1;border-bottom:none;"></div>
<span class="t" style="left:11.90px;top:68px;font-size:5.8px;color:#0e1014;transform:scaleX(0.9495);">Folien</span>
<span class="t" style="left:45.10px;top:68px;font-size:5.8px;color:#1d2026;transform:scaleX(0.9515);">Gliederung</span>
<div style="left:1.2px;top:76px;width:129px;height:92.2px;background:linear-gradient(180deg,rgba(253,245,216,.85) 0,rgba(253,245,216,0) 4px,rgba(253,246,222,0) 30%,rgba(253,247,226,.55) 65%,rgba(253,248,230,.95) 100%),linear-gradient(90deg,#f8d872 0,#fae08b 8px,#fbe9ab 12px,#fcefc2 100%);border:0.5px solid #f6dc94;border-bottom-color:#f9ebbf;border-radius:1px;"></div>
<div style="left:11.4px;top:79.4px;width:118px;height:87px;background:#fff;border:0.6px solid #c9c0a2;box-shadow:0.6px 0.6px 1px rgba(120,110,80,.4);"></div>
<span class="t" style="left:4.23px;top:81px;font-size:6px;color:#2b2a26;font-weight:bold;">1</span>
<span class="t" style="left:54.00px;top:114px;font-size:5.8px;color:#262626;font-weight:bold;transform:scaleX(1.0792);">Hauptfolie</span>
<span class="t" style="left:49.00px;top:130px;font-size:5px;color:#a2a2a2;transform:scaleX(1.0137);">Untertitel für Folie</span>
<div style="left:130.8px;top:65px;width:2.3px;height:405.5px;background:linear-gradient(90deg,#e7e9ed,#f7f8fa 50%,#dfe2e7);"></div>
<div style="left:133px;top:447px;width:667px;height:1.2px;background:#e9ebef;"></div>
<div style="left:133px;top:447.6px;width:667px;height:22.9px;background:#fff;border-top:0.7px solid #a4a9b1;border-left:0.7px solid #a9aeb6;"></div>
<span class="t" style="left:138.00px;top:452px;font-size:8.9px;color:#1c1e22;transform:scaleX(0.8500);">Klicken Sie, um Notizen hinzuzufügen</span>
<div style="left:791px;top:448.2px;width:9px;height:22.3px;background:#eceef2;border-left:0.5px solid #d7dae0;"></div>
<svg style="left:793.5px;top:452.5px;" width="4" height="2.4" viewBox="0 0 4 2.4"><path d="M0 2.4L2 0L4 2.4Z" fill="#7d838c"/></svg>
<svg style="left:793.5px;top:464px;" width="4" height="2.4" viewBox="0 0 4 2.4"><path d="M0 0L2 2.4L4 0Z" fill="#7d838c"/></svg>
<div style="left:0px;top:470.3px;width:800px;height:10.2px;background:linear-gradient(180deg,#e3e6eb 0,#d6dae1 45%,#cdd2da 100%);border-top:0.6px solid #aab0b9;"></div>
<span class="t" style="left:3.90px;top:473px;font-size:5.3px;color:#24272c;transform:scaleX(0.9886);">Folie 1 von 1</span>
<span class="t" style="left:44.60px;top:473px;font-size:5.3px;color:#24272c;transform:scaleX(0.9017);">&quot;Larissa&quot;</span>
<span class="t" style="left:88.40px;top:473px;font-size:5.3px;color:#24272c;transform:scaleX(1.0128);">Deutsch (Deutschland)</span>
<div style="left:40px;top:471.5px;width:0.6px;height:8px;background:#b3b8c1;box-shadow:.6px 0 0 #eef0f3;"></div>
<div style="left:68.6px;top:471.5px;width:0.6px;height:8px;background:#b3b8c1;box-shadow:.6px 0 0 #eef0f3;"></div>
<div style="left:147px;top:471.5px;width:0.6px;height:8px;background:#b3b8c1;box-shadow:.6px 0 0 #eef0f3;"></div>
<svg style="left:72.5px;top:471.6px;" width="8" height="7" viewBox="0 0 8 7"><rect x="0.8" y="2.6" width="5" height="3.6" fill="#f4f5f8" stroke="#7b8594" stroke-width=".5"/><path d="M2.4 3.6L3.8 5.4L7 0.8" fill="none" stroke="#3a5fb0" stroke-width=".9"/></svg>
<div style="left:666.2px;top:471.4px;width:8.4px;height:8px;background:linear-gradient(180deg,#fdf1c4,#fbdf88);border:0.6px solid #ddb24c;border-radius:.8px;"></div>
<div style="left:667.8px;top:473.2px;width:5.2px;height:4.4px;background:#fdfdfd;border:0.5px solid #5f6670;"></div>
<div style="left:668.6px;top:474px;width:1.4px;height:2.6px;background:#8e97a6;"></div>
<div style="left:677.6px;top:473px;width:2.2px;height:2px;background:#f4f5f7;border:0.4px solid #7d848e;"></div>
<div style="left:677.6px;top:475.6px;width:2.2px;height:2px;background:#f4f5f7;border:0.4px solid #7d848e;"></div>
<div style="left:680.4px;top:473px;width:2.2px;height:2px;background:#f4f5f7;border:0.4px solid #7d848e;"></div>
<div style="left:680.4px;top:475.6px;width:2.2px;height:2px;background:#f4f5f7;border:0.4px solid #7d848e;"></div>
<svg style="left:686.2px;top:472.6px;" width="6" height="5.6" viewBox="0 0 6 5.6"><path d="M0.4 0.8C1.4 0.2 2.2 0.4 3 1C3.8 0.4 4.6 0.2 5.6 0.8V5C4.6 4.4 3.8 4.6 3 5.2C2.2 4.6 1.4 4.4 0.4 5Z" fill="#f1f2f5" stroke="#757c86" stroke-width=".5"/></svg>
<svg style="left:695px;top:472.6px;" width="6.4" height="6" viewBox="0 0 6.4 6"><path d="M0.3 0.5H6.1M0.9 0.5V3.6H5.5V0.5M3.2 3.6V5.6M1.8 5.6H4.6" fill="none" stroke="#5f6670" stroke-width=".6"/></svg>
<span class="t" style="left:705.20px;top:473px;font-size:5.6px;color:#24272c;transform:scaleX(0.8817);">107 %</span>
<div style="left:723.9px;top:472.2px;width:6.6px;height:6.6px;border-radius:50%;background:radial-gradient(circle at 40% 30%,#ffffff,#dfe3e9);border:0.6px solid #747b86;"></div>
<div style="left:779.1px;top:472.2px;width:6.6px;height:6.6px;border-radius:50%;background:radial-gradient(circle at 40% 30%,#ffffff,#dfe3e9);border:0.6px solid #747b86;"></div>
<div style="left:725.6px;top:475.2px;width:3.2px;height:0.7px;background:#3e434b;"></div>
<div style="left:780.8px;top:475.2px;width:3.2px;height:0.7px;background:#3e434b;"></div>
<div style="left:782.05px;top:473.9px;width:0.7px;height:3.2px;background:#3e434b;"></div>
<div style="left:732px;top:475.2px;width:46px;height:0.7px;background:#a9afb9;box-shadow:0 .6px 0 #f3f4f7;"></div>
<svg style="left:753px;top:472px;" width="4" height="7" viewBox="0 0 4 7"><path d="M0.4 0.4H3.6V4.6L2 6.6L0.4 4.6Z" fill="#f4f5f8" stroke="#69707b" stroke-width=".55"/></svg>
<div style="left:789.4px;top:471.6px;width:7.4px;height:7.6px;background:linear-gradient(180deg,#f7f8fa,#dfe3e9);border:0.5px solid #8b929d;border-radius:.8px;"></div>
<svg style="left:790.6px;top:472.8px;" width="5" height="5.2" viewBox="0 0 5 5.2"><path d="M0.4 1.8V0.4H1.8M3.2 0.4H4.6V1.8M4.6 3.4V4.8H3.2M1.8 4.8H0.4V3.4M0.6 0.6L4.4 4.6M4.4 0.6L0.6 4.6" fill="none" stroke="#4b515a" stroke-width=".55"/></svg>
<div style="left:0px;top:480.5px;width:800px;height:19.5px;background:linear-gradient(180deg,#7db7e8 0,#3e93dc 1.2px,#2f87d6 35%,#2a7fce 70%,#2577c4 100%);"></div>
<div style="left:0px;top:480.5px;width:800px;height:19.5px;background:linear-gradient(90deg,rgba(30,110,200,0) 0,rgba(20,100,190,.0) 30%,rgba(20,90,175,.38) 55%,rgba(15,75,155,.6) 75%,rgba(12,65,140,.72) 100%);"></div>
<svg style="left:540px;top:480.5px;" width="70" height="19.5" viewBox="0 0 70 19.5"><path d="M26 0C38 4 48 11 55 19.5H60C53 10 43 3.5 32 0Z" fill="rgba(140,195,240,.5)"/><path d="M0 19.5C8 8 18 2 30 0H36C50 5 56 12 60 19.5Z" fill="rgba(60,130,205,.16)"/></svg>
<div style="left:3.4px;top:481.4px;width:18.8px;height:18.8px;border-radius:50%;background:radial-gradient(circle at 50% 42%,#8fd0f7 0,#4a9fe2 38%,#2467b8 62%,#153f80 80%,#0f2f66 100%);box-shadow:0 0 1px .3px rgba(10,35,80,.75);"></div>
<svg style="left:6.8px;top:485.2px;" width="12" height="11.4" viewBox="0 0 12 11.4"><path d="M1.2 2.4C2.8 1.4 4.2 1.5 5.5 2.2L4.7 5.3C3.4 4.6 1.9 4.7 0.3 5.6Z" fill="#ea5a2c"/><path d="M6.3 2.5C7.7 3.2 9.2 3.2 10.9 2.3L10.1 5.4C8.5 6.2 7 6.2 5.5 5.5Z" fill="#86c440"/><path d="M0.1 6.4C1.7 5.6 3.2 5.6 4.5 6.3L3.7 9.4C2.4 8.7 0.9 8.7-0.7 9.5Z" fill="#4a9bea"/><path d="M5.3 6.5C6.8 7.2 8.3 7.2 9.9 6.4L9.1 9.5C7.5 10.3 6 10.3 4.5 9.6Z" fill="#f8c832"/></svg>
<svg style="left:34.6px;top:482.6px;" width="15.5" height="15.5" viewBox="0 0 15.5 15.5"><circle cx="7.6" cy="8.2" r="4.7" fill="none" stroke="#58c3f6" stroke-width="2.7"/><path d="M3 8.2H12.6" stroke="#58c3f6" stroke-width="1.9"/><path d="M9.2 13.6H14V9.4H9.2Z" fill="#2f87d6"/><path d="M1.2 13.8C-1.8 7 7 0.4 14.6 1.6C9.2 1.6 2.8 5.8 3 12.2Z" fill="#f3cb40"/></svg>
<div style="left:58.2px;top:481.1px;width:27.2px;height:18.9px;background:linear-gradient(180deg,rgba(255,255,255,0.40) 0,rgba(235,245,255,0.28) 45%,rgba(200,228,250,0.23) 100%);border:0.6px solid rgba(225,240,255,.55);border-bottom:none;border-radius:1.5px 1.5px 0 0;box-shadow:0 0 0 .5px rgba(20,60,110,.55);"></div>
<div style="left:64.4px;top:485.4px;width:14.6px;height:10.2px;background:linear-gradient(180deg,#f8e9a0,#eccb5a);border:0.5px solid #b99730;border-radius:.8px;"></div>
<div style="left:64.4px;top:484px;width:6px;height:2.4px;background:#f3d978;border:0.5px solid #b99730;border-bottom:none;border-radius:.8px .8px 0 0;"></div>
<div style="left:66.6px;top:490.6px;width:10.4px;height:4.2px;background:linear-gradient(180deg,#bfe0f6,#7fb8e6);border:0.4px solid #5a93c4;"></div>
<div style="left:95.8px;top:484.2px;width:10.8px;height:12.2px;background:linear-gradient(180deg,#f6f7f9,#d9dde3);border-radius:1.2px;border:0.5px solid #9aa3af;"></div>
<div style="left:97.2px;top:486px;width:8px;height:8.6px;border-radius:50%;background:radial-gradient(circle at 45% 40%,#ffb45a,#ec6f12);"></div>
<svg style="left:99.8px;top:487.8px;" width="3.6" height="5" viewBox="0 0 3.6 5"><path d="M0 0L3.6 2.5L0 5Z" fill="#fff"/></svg>
<div style="left:125.4px;top:483.2px;width:12.4px;height:11.4px;background:linear-gradient(180deg,#ffffff,#e6ecf5);border:0.5px solid #9fb2cd;"></div>
<span class="t" style="left:125.68px;top:484px;font-size:10px;color:#1f56b4;font-weight:bold;">W</span>
<div style="left:135.6px;top:485px;width:3.6px;height:7px;background:#2c64c0;opacity:.9;"></div>
<div style="left:147px;top:481.1px;width:27px;height:18.9px;background:linear-gradient(180deg,rgba(255,255,255,0.34) 0,rgba(235,245,255,0.22) 45%,rgba(200,228,250,0.17) 100%);border:0.6px solid rgba(225,240,255,.55);border-bottom:none;border-radius:1.5px 1.5px 0 0;box-shadow:0 0 0 .5px rgba(20,60,110,.55);"></div>
<div style="left:153.8px;top:484px;width:14px;height:14px;border-radius:50%;background:radial-gradient(circle at 55% 40%,#4b8fdf 0,#2c5fc2 38%,#e8681c 42%,#f08a1e 70%,#d9480f 100%);"></div>
<svg style="left:153.8px;top:484px;" width="14" height="14" viewBox="0 0 14 14"><path d="M1.2 5C2 1.8 5.4 0 8.4 0.8C6 1.2 4.4 2.6 4 4.6C3 5.6 3.4 8 5 9C6.8 10.2 9.6 9.4 10.2 7C11 8.8 10 12 7 12.6C3 13.2 0 9.6 1.2 5Z" fill="#f4861c"/><path d="M1.6 4.2C3 2 4.4 1.4 6 1.6C4.6 2.4 4 3.4 4 4.6Z" fill="#fbc43a"/></svg>
<div style="left:184px;top:483.4px;width:11.6px;height:11.6px;background:linear-gradient(180deg,#ffffff,#e6f2e4);border:0.5px solid #9cc49a;"></div>
<span class="t" style="left:185.46px;top:484px;font-size:10px;color:#2f9a3a;font-weight:bold;">X</span>
<div style="left:191.6px;top:490.6px;width:4.6px;height:4.6px;background:#f2f6ef;border:0.4px solid #a6c8a3;"></div>
<div style="left:205.8px;top:481.1px;width:27px;height:18.9px;background:linear-gradient(180deg,rgba(255,255,255,0.34) 0,rgba(235,245,255,0.22) 45%,rgba(200,228,250,0.17) 100%);border:0.6px solid rgba(225,240,255,.55);border-bottom:none;border-radius:1.5px 1.5px 0 0;box-shadow:0 0 0 .5px rgba(20,60,110,.55);"></div>
<div style="left:212.8px;top:484px;width:13px;height:12.6px;background:linear-gradient(180deg,#4a1210,#2a0706);border:0.7px solid #8e1c17;"></div>
<svg style="left:214.4px;top:485.6px;" width="10" height="9.6" viewBox="0 0 10 9.6"><path d="M0.6 8.6C2.4 7.4 4 4.4 4.4 1.2C4.6 0.2 5.6 0.4 5.4 1.4C5 4 7 6.6 9.4 6.8C7 6.4 3 7.2 0.6 8.6Z" fill="none" stroke="#f4f1f0" stroke-width=".9"/></svg>
<div style="left:234.6px;top:481.1px;width:28px;height:18.9px;background:linear-gradient(180deg,rgba(255,255,255,0.62) 0,rgba(235,245,255,0.50) 45%,rgba(200,228,250,0.45) 100%);border:0.6px solid rgba(225,240,255,.55);border-bottom:none;border-radius:1.5px 1.5px 0 0;box-shadow:0 0 0 .5px rgba(20,60,110,.55);"></div>
<div style="left:241px;top:483.6px;width:14.6px;height:13.2px;background:linear-gradient(180deg,#ffffff,#fbe9df);border:0.5px solid #e0a98b;border-radius:.8px;"></div>
<span class="t" style="left:242.53px;top:484px;font-size:11px;color:#e2672a;font-weight:bold;">P</span>
<div style="left:249.6px;top:489.4px;width:5.6px;height:5.6px;border-radius:50%;background:#f7d9c8;border:0.6px solid #e28a5a;"></div>
<span class="t" style="left:697.20px;top:487px;font-size:5.6px;color:#f4f8fc;transform:scaleX(1.3625);">DE</span>
<svg style="left:713.4px;top:489.6px;" width="3.4" height="2.4" viewBox="0 0 3.4 2.4"><path d="M0 2.4L1.7 0L3.4 2.4Z" fill="#eef4fb"/></svg>
<svg style="left:722.6px;top:486.8px;" width="8" height="7.5" viewBox="0 0 8 7.5"><path d="M1 0.6V7" stroke="#f2f6fb" stroke-width=".8"/><path d="M1.6 1C3 0.2 4.2 1.8 6.6 0.8V4.4C4.2 5.4 3 3.8 1.6 4.6Z" fill="#f4f8fc"/></svg>
<svg style="left:735.6px;top:486.8px;" width="8" height="7.5" viewBox="0 0 8 7.5"><rect x="0.6" y="0.8" width="6" height="4.4" fill="#2d5f9e" stroke="#f1f5fa" stroke-width=".8"/><path d="M2.2 6.6H6.4M5.8 5.4V6.6" stroke="#eef3f9" stroke-width=".8"/></svg>
<svg style="left:746.4px;top:486.6px;" width="9" height="8" viewBox="0 0 9 8"><path d="M2 1.2L4.4 0.4V7L2 6.2Z" fill="#f4f7fb"/><circle cx="5.8" cy="5" r="2.3" fill="#e1392b" stroke="#fff" stroke-width=".3"/></svg>
<span class="t" style="left:768.00px;top:484px;font-size:5.6px;color:#f4f8fc;transform:scaleX(1.0418);">09:27</span>
<span class="t" style="left:761.80px;top:492px;font-size:5.6px;color:#f4f8fc;transform:scaleX(0.9633);">03.04.2017</span>
<div style="left:794.8px;top:481px;width:5.2px;height:19px;background:linear-gradient(90deg,rgba(255,255,255,.25),rgba(255,255,255,.08));border-left:0.6px solid rgba(210,230,250,.7);"></div>
<div style="left:89.5px;top:54.9px;width:155.8px;height:204.7px;background:#fff;border:0.6px solid #a9aeb5;box-shadow:1.5px 1.5px 3px rgba(60,65,75,.36);"></div>
<div style="left:90.1px;top:55.5px;width:154.6px;height:8.6px;background:linear-gradient(180deg,#f2f4f7,#e9ecf0);border-bottom:0.5px solid #dcdfe5;"></div>
<span class="t" style="left:93.70px;top:58px;font-size:5.7px;color:#22262c;font-weight:bold;transform:scaleX(0.8415);">Larissa</span>
<div style="left:90.8px;top:64.3px;width:51.3px;height:51.6px;background:linear-gradient(180deg,#fdeeb3 0,#fce391 60%,#fbd76f 82%,#fbd972 100%);border:0.6px solid #e8c45a;border-radius:1px;"></div>
<div style="left:92.3px;top:65.8px;width:47.5px;height:36px;background:#fff;border:0.7px solid #d8c27a;"></div>
<div style="left:96.9px;top:77.3px;width:39px;height:7.4px;border:0.55px solid #c9cbd0;background:#fff;"></div>
<div style="left:96.9px;top:84.6px;width:39px;height:2.6px;background:#d9dade;"></div>
<div style="left:100px;top:87px;width:33px;height:8.4px;border:0.55px solid #c9cbd0;background:#fff;"></div>
<div style="left:143.8px;top:65.8px;width:47.5px;height:36px;background:#fff;border:0.7px solid #a0a3aa;"></div>
<div style="left:147.6px;top:68.8px;width:39.9px;height:5.2px;border:0.55px solid #d2d3d9;background:transparent;"></div>
<div style="left:147.6px;top:73.9px;width:39.9px;height:2.4px;background:#dadbdf;"></div>
<div style="left:147.6px;top:76.2px;width:39.9px;height:21.6px;border:0.55px solid #d2d3d9;background:transparent;"></div>
<svg style="left:161.55px;top:80.9px;" width="12.6" height="8.6" viewBox="0 0 12.6 8.6"><rect x="0.2" y="0.6" width="3.6" height="3.2" fill="#c3def5"/><path d="M0.2 1.6H3.8M0.2 2.7H3.8M1.4 0.6V3.8M2.6 0.6V3.8" stroke="#eef6fc" stroke-width=".35"/><rect x="4.4" y="0.2" width="3.8" height="3.6" fill="#c9a15a"/><rect x="5" y="1.6" width="2.6" height="2.2" fill="#8a6a3c"/><rect x="8.8" y="0.8" width="3.4" height="3" fill="#c3dc9a"/><rect x="9.4" y="0.4" width="2" height="1.4" fill="#e9d36a"/><rect x="0.2" y="4.6" width="3.6" height="3.6" fill="#8fc4ee"/><rect x="0.9" y="5.4" width="2.2" height="2.8" fill="#dcecf9"/><rect x="4.4" y="4.6" width="3.8" height="3.4" fill="#b9cfe4"/><rect x="5" y="5.6" width="2.6" height="1.4" fill="#7f9dbd"/><rect x="8.8" y="4.6" width="3.4" height="3.6" fill="#8aa9c6"/><rect x="9.5" y="5.2" width="2" height="2.4" fill="#cfd8e2"/></svg>
<div style="left:195.3px;top:65.8px;width:47.5px;height:36px;background:#fff;border:0.7px solid #a0a3aa;"></div>
<div style="left:200.2px;top:82px;width:37.9px;height:7px;border:0.55px solid #c3c5cb;background:transparent;"></div>
<div style="left:200.2px;top:88.9px;width:37.9px;height:7px;border:0.55px solid #c3c5cb;background:transparent;"></div>
<div style="left:200.2px;top:88.5px;width:37.9px;height:0.9px;background:#a9abb2;"></div>
<div style="left:92.3px;top:120.2px;width:47.5px;height:36px;background:#fff;border:0.7px solid #a0a3aa;"></div>
<div style="left:96.3px;top:122.6px;width:39.7px;height:5.6px;border:0.55px solid #d2d3d9;background:transparent;"></div>
<div style="left:96.3px;top:128px;width:39.7px;height:0.7px;background:#e0cfcf;"></div>
<div style="left:96.3px;top:128.4px;width:20.4px;height:23.6px;border:0.55px solid #d2d3d9;background:transparent;"></div>
<div style="left:117.5px;top:128.4px;width:18.5px;height:23.6px;border:0.55px solid #d2d3d9;background:transparent;"></div>
<svg style="left:99.7px;top:135.7px;" width="12.6" height="8.6" viewBox="0 0 12.6 8.6"><rect x="0.2" y="0.6" width="3.6" height="3.2" fill="#c3def5"/><path d="M0.2 1.6H3.8M0.2 2.7H3.8M1.4 0.6V3.8M2.6 0.6V3.8" stroke="#eef6fc" stroke-width=".35"/><rect x="4.4" y="0.2" width="3.8" height="3.6" fill="#c9a15a"/><rect x="5" y="1.6" width="2.6" height="2.2" fill="#8a6a3c"/><rect x="8.8" y="0.8" width="3.4" height="3" fill="#c3dc9a"/><rect x="9.4" y="0.4" width="2" height="1.4" fill="#e9d36a"/><rect x="0.2" y="4.6" width="3.6" height="3.6" fill="#8fc4ee"/><rect x="0.9" y="5.4" width="2.2" height="2.8" fill="#dcecf9"/><rect x="4.4" y="4.6" width="3.8" height="3.4" fill="#b9cfe4"/><rect x="5" y="5.6" width="2.6" height="1.4" fill="#7f9dbd"/><rect x="8.8" y="4.6" width="3.4" height="3.6" fill="#8aa9c6"/><rect x="9.5" y="5.2" width="2" height="2.4" fill="#cfd8e2"/></svg>
<svg style="left:120.9px;top:135.7px;" width="12.6" height="8.6" viewBox="0 0 12.6 8.6"><rect x="0.2" y="0.6" width="3.6" height="3.2" fill="#c3def5"/><path d="M0.2 1.6H3.8M0.2 2.7H3.8M1.4 0.6V3.8M2.6 0.6V3.8" stroke="#eef6fc" stroke-width=".35"/><rect x="4.4" y="0.2" width="3.8" height="3.6" fill="#c9a15a"/><rect x="5" y="1.6" width="2.6" height="2.2" fill="#8a6a3c"/><rect x="8.8" y="0.8" width="3.4" height="3" fill="#c3dc9a"/><rect x="9.4" y="0.4" width="2" height="1.4" fill="#e9d36a"/><rect x="0.2" y="4.6" width="3.6" height="3.6" fill="#8fc4ee"/><rect x="0.9" y="5.4" width="2.2" height="2.8" fill="#dcecf9"/><rect x="4.4" y="4.6" width="3.8" height="3.4" fill="#b9cfe4"/><rect x="5" y="5.6" width="2.6" height="1.4" fill="#7f9dbd"/><rect x="8.8" y="4.6" width="3.4" height="3.6" fill="#8aa9c6"/><rect x="9.5" y="5.2" width="2" height="2.4" fill="#cfd8e2"/></svg>
<div style="left:143.8px;top:120.2px;width:47.5px;height:36px;background:#fff;border:0.7px solid #a0a3aa;"></div>
<div style="left:147.4px;top:122.4px;width:40.3px;height:6.2px;border:0.55px solid #d2d3d9;background:transparent;"></div>
<div style="left:147.4px;top:128.4px;width:40.3px;height:1.3px;background:#a6a8af;"></div>
<div style="left:147.4px;top:129.8px;width:20.3px;height:2.8px;border:0.55px solid #d2d3d9;background:transparent;"></div>
<div style="left:168.2px;top:129.8px;width:19.5px;height:2.8px;border:0.55px solid #d2d3d9;background:transparent;"></div>
<div style="left:147.4px;top:132.5px;width:20.3px;height:19.5px;border:0.55px solid #d2d3d9;background:transparent;"></div>
<div style="left:168.2px;top:132.5px;width:19.5px;height:19.5px;border:0.55px solid #d2d3d9;background:transparent;"></div>
<svg style="left:151.1px;top:136.2px;" width="12.6" height="8.6" viewBox="0 0 12.6 8.6"><rect x="0.2" y="0.6" width="3.6" height="3.2" fill="#c3def5"/><path d="M0.2 1.6H3.8M0.2 2.7H3.8M1.4 0.6V3.8M2.6 0.6V3.8" stroke="#eef6fc" stroke-width=".35"/><rect x="4.4" y="0.2" width="3.8" height="3.6" fill="#c9a15a"/><rect x="5" y="1.6" width="2.6" height="2.2" fill="#8a6a3c"/><rect x="8.8" y="0.8" width="3.4" height="3" fill="#c3dc9a"/><rect x="9.4" y="0.4" width="2" height="1.4" fill="#e9d36a"/><rect x="0.2" y="4.6" width="3.6" height="3.6" fill="#8fc4ee"/><rect x="0.9" y="5.4" width="2.2" height="2.8" fill="#dcecf9"/><rect x="4.4" y="4.6" width="3.8" height="3.4" fill="#b9cfe4"/><rect x="5" y="5.6" width="2.6" height="1.4" fill="#7f9dbd"/><rect x="8.8" y="4.6" width="3.4" height="3.6" fill="#8aa9c6"/><rect x="9.5" y="5.2" width="2" height="2.4" fill="#cfd8e2"/></svg>
<svg style="left:171.8px;top:136.2px;" width="12.6" height="8.6" viewBox="0 0 12.6 8.6"><rect x="0.2" y="0.6" width="3.6" height="3.2" fill="#c3def5"/><path d="M0.2 1.6H3.8M0.2 2.7H3.8M1.4 0.6V3.8M2.6 0.6V3.8" stroke="#eef6fc" stroke-width=".35"/><rect x="4.4" y="0.2" width="3.8" height="3.6" fill="#c9a15a"/><rect x="5" y="1.6" width="2.6" height="2.2" fill="#8a6a3c"/><rect x="8.8" y="0.8" width="3.4" height="3" fill="#c3dc9a"/><rect x="9.4" y="0.4" width="2" height="1.4" fill="#e9d36a"/><rect x="0.2" y="4.6" width="3.6" height="3.6" fill="#8fc4ee"/><rect x="0.9" y="5.4" width="2.2" height="2.8" fill="#dcecf9"/><rect x="4.4" y="4.6" width="3.8" height="3.4" fill="#b9cfe4"/><rect x="5" y="5.6" width="2.6" height="1.4" fill="#7f9dbd"/><rect x="8.8" y="4.6" width="3.4" height="3.6" fill="#8aa9c6"/><rect x="9.5" y="5.2" width="2" height="2.4" fill="#cfd8e2"/></svg>
<div style="left:195.3px;top:120.2px;width:47.5px;height:36px;background:#fff;border:0.7px solid #a0a3aa;"></div>
<div style="left:199.3px;top:123.2px;width:40.3px;height:5.2px;border:0.55px solid #bdbfc6;background:transparent;"></div>
<div style="left:92.3px;top:174.4px;width:47.5px;height:36px;background:#fff;border:0.7px solid #a0a3aa;"></div>
<div style="left:143.8px;top:174.4px;width:47.5px;height:36px;background:#fff;border:0.7px solid #a0a3aa;"></div>
<div style="left:147.4px;top:177.8px;width:14.6px;height:5px;border:0.55px solid #d2d3d9;background:transparent;"></div>
<div style="left:147.4px;top:182.7px;width:14.6px;height:22.8px;border:0.55px solid #d2d3d9;background:transparent;"></div>
<div style="left:163.2px;top:177.2px;width:25px;height:28.4px;border:0.55px solid #d2d3d9;background:transparent;"></div>
<svg style="left:169.3px;top:185.7px;" width="12.6" height="8.6" viewBox="0 0 12.6 8.6"><rect x="0.2" y="0.6" width="3.6" height="3.2" fill="#c3def5"/><path d="M0.2 1.6H3.8M0.2 2.7H3.8M1.4 0.6V3.8M2.6 0.6V3.8" stroke="#eef6fc" stroke-width=".35"/><rect x="4.4" y="0.2" width="3.8" height="3.6" fill="#c9a15a"/><rect x="5" y="1.6" width="2.6" height="2.2" fill="#8a6a3c"/><rect x="8.8" y="0.8" width="3.4" height="3" fill="#c3dc9a"/><rect x="9.4" y="0.4" width="2" height="1.4" fill="#e9d36a"/><rect x="0.2" y="4.6" width="3.6" height="3.6" fill="#8fc4ee"/><rect x="0.9" y="5.4" width="2.2" height="2.8" fill="#dcecf9"/><rect x="4.4" y="4.6" width="3.8" height="3.4" fill="#b9cfe4"/><rect x="5" y="5.6" width="2.6" height="1.4" fill="#7f9dbd"/><rect x="8.8" y="4.6" width="3.4" height="3.6" fill="#8aa9c6"/><rect x="9.5" y="5.2" width="2" height="2.4" fill="#cfd8e2"/></svg>
<div style="left:195.3px;top:174.4px;width:47.5px;height:36px;background:#fff;border:0.7px solid #a0a3aa;"></div>
<div style="left:206px;top:178.2px;width:26.8px;height:20.3px;border:0.55px solid #c3c5cb;background:transparent;"></div>
<div style="left:217.6px;top:186.2px;width:3.4px;height:3.2px;background:#c2d8ee;"></div>
<div style="left:206px;top:198.4px;width:26.8px;height:3.8px;border:0.55px solid #b3b5bc;background:transparent;"></div>
<div style="left:206px;top:202.1px;width:26.8px;height:3.9px;border:0.55px solid #b3b5bc;background:transparent;"></div>
<span class="t" style="left:106.10px;top:103px;font-size:5.3px;color:#23262b;transform:scaleX(1.0338);">Titelfolie</span>
<span class="t" style="left:149.25px;top:103px;font-size:5.3px;color:#23262b;transform:scaleX(1.0848);">Titel und Inhalt</span>
<span class="t" style="left:205.50px;top:103px;font-size:5.3px;color:#23262b;transform:scaleX(1.0146);">Abschnitts-</span>
<span class="t" style="left:206.30px;top:109px;font-size:5.3px;color:#23262b;transform:scaleX(1.0104);">überschrift</span>
<span class="t" style="left:101.10px;top:157px;font-size:5.3px;color:#23262b;transform:scaleX(1.0358);">Zwei Inhalte</span>
<span class="t" style="left:156.25px;top:157px;font-size:5.3px;color:#23262b;transform:scaleX(1.0319);">Vergleich</span>
<span class="t" style="left:208.85px;top:157px;font-size:5.3px;color:#23262b;transform:scaleX(1.0287);">Nur Titel</span>
<span class="t" style="left:110.95px;top:212px;font-size:5.3px;color:#23262b;transform:scaleX(0.9709);">Leer</span>
<span class="t" style="left:156.30px;top:212px;font-size:5.3px;color:#23262b;transform:scaleX(1.0231);">Inhalt mit</span>
<span class="t" style="left:154.00px;top:218px;font-size:5.3px;color:#23262b;transform:scaleX(1.0381);">Überschrift</span>
<span class="t" style="left:210.15px;top:212px;font-size:5.3px;color:#23262b;transform:scaleX(1.0072);">Bild mit</span>
<span class="t" style="left:205.70px;top:218px;font-size:5.3px;color:#23262b;transform:scaleX(1.0381);">Überschrift</span>
<svg style="left:121.8px;top:82px;" width="6.4" height="11.4" viewBox="0 0 6.4 11.4"><path d="M0.5 0.6V8.6L2.3 6.9L3.7 10.2L4.9 9.7L3.5 6.5H5.9Z" fill="#fff" stroke="#2b2d33" stroke-width=".7" stroke-linejoin="round"/></svg>
<div style="left:91px;top:226.4px;width:153.4px;height:0.6px;background:#e8eaee;"></div>
<span class="t" style="left:106.20px;top:231px;font-size:5.7px;color:#17191d;transform:scaleX(0.9835);">Ausgewählte Folien duplizieren</span>
<span class="t" style="left:106.20px;top:241px;font-size:5.7px;color:#17191d;transform:scaleX(0.9666);">Folien aus Gliederung...</span>
<span class="t" style="left:106.20px;top:251px;font-size:5.7px;color:#17191d;transform:scaleX(0.9739);">Folien wiederverwenden...</span>
<div style="left:157.6px;top:235.2px;width:2.8px;height:0.45px;background:#2f333a;"></div>
<div style="left:121.8px;top:245.4px;width:2.8px;height:0.45px;background:#2f333a;"></div>
<div style="left:106.2px;top:255.8px;width:2.8px;height:0.45px;background:#2f333a;"></div>
<div style="left:92.6px;top:229.6px;width:5px;height:5.6px;background:#f8f1d0;border:0.5px solid #d2c48c;"></div>
<div style="left:94.8px;top:231.4px;width:5px;height:5.4px;background:#f4f6f9;border:0.5px solid #a9b3c2;"></div>
<div style="left:92.4px;top:239.8px;width:4.6px;height:4.6px;background:#dde6f3;border:0.5px solid #8fa3c4;"></div>
<div style="left:95px;top:242.4px;width:5px;height:5px;background:#eef2f8;border:0.5px solid #8fa3c4;"></div>
<div style="left:92.6px;top:250.8px;width:4.6px;height:4.2px;background:#f6e08c;border:0.5px solid #d3b755;"></div>
<div style="left:94.8px;top:252.2px;width:5.2px;height:5.2px;background:#e9eef5;border:0.5px solid #9eabbf;"></div>
</div>
</body></html>
